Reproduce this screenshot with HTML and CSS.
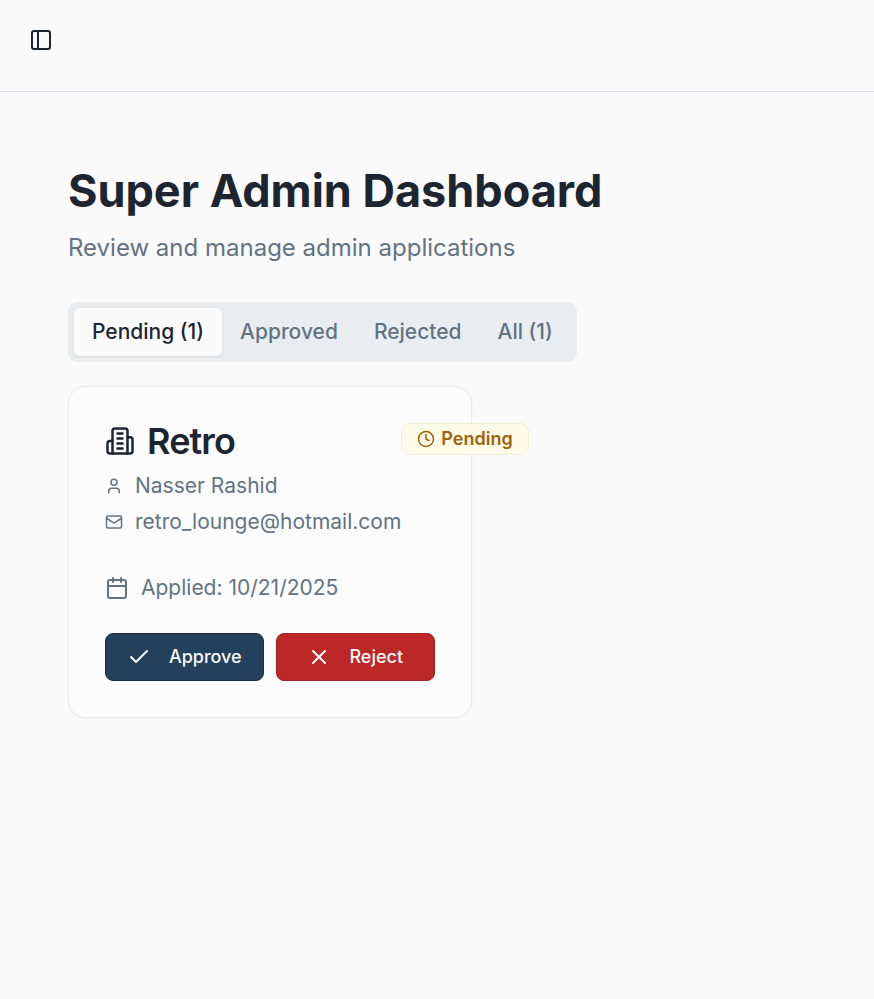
FILE: index.html
```html
<!DOCTYPE html>
<html lang="en">
<head>
<meta charset="utf-8">
<title>Super Admin Dashboard</title>
<link rel="stylesheet" href="styles.css">
</head>
<body>
<header class="topbar">
  <button class="toggle" aria-label="Toggle sidebar">
    <svg class="icon i24" viewBox="0 0 24 24"><rect x="3" y="3" width="18" height="18" rx="2"/><path d="M9 3v18"/></svg>
  </button>
</header>
<main class="page">
  <h1 class="title">Super Admin Dashboard</h1>
  <p class="subtitle">Review and manage admin applications</p>
  <div class="tabs">
    <button class="tab active">Pending (1)</button>
    <button class="tab">Approved</button>
    <button class="tab">Rejected</button>
    <button class="tab">All (1)</button>
  </div>
  <section class="card">
    <div class="card-head">
      <div class="info">
        <h2 class="name"><svg class="icon i30" viewBox="0 0 24 24"><path d="M6 22V4a2 2 0 0 1 2-2h8a2 2 0 0 1 2 2v18Z"/><path d="M6 12H4a2 2 0 0 0-2 2v6a2 2 0 0 0 2 2h2"/><path d="M18 9h2a2 2 0 0 1 2 2v9a2 2 0 0 1-2 2h-2"/><path d="M10 6h4M10 10h4M10 14h4M10 18h4"/></svg>Retro</h2>
        <div class="row"><svg class="icon i18" viewBox="0 0 24 24"><path d="M19 21v-2a4 4 0 0 0-4-4H9a4 4 0 0 0-4 4v2"/><circle cx="12" cy="7" r="4"/></svg>Nasser Rashid</div>
        <div class="row"><svg class="icon i18" viewBox="0 0 24 24"><rect x="2" y="4" width="20" height="16" rx="2"/><path d="m22 7-8.97 5.7a1.94 1.94 0 0 1-2.06 0L2 7"/></svg>retro_lounge@hotmail.com</div>
      </div>
      <span class="badge"><svg class="icon i18" viewBox="0 0 24 24"><circle cx="12" cy="12" r="10"/><path d="M12 6v6l4 2"/></svg><span class="label">Pending</span></span>
    </div>
    <div class="row applied"><svg class="icon i24" viewBox="0 0 24 24"><path d="M8 2v4M16 2v4"/><rect x="3" y="4" width="18" height="18" rx="2"/><path d="M3 10h18"/></svg>Applied: 10/21/2025</div>
    <div class="actions">
      <button class="btn approve"><svg class="icon i24" viewBox="0 0 24 24"><path d="M20 6 9 17l-5-5"/></svg><span class="label">Approve</span></button>
      <button class="btn reject"><svg class="icon i24" viewBox="0 0 24 24"><path d="M18 6 6 18M6 6l12 12"/></svg><span class="label">Reject</span></button>
    </div>
  </section>
</main>
</body>
</html>
```
FILE: styles.css
```css
* { box-sizing: border-box; margin: 0; }
body { min-height: 100vh; background: #fafafa; color: #1c2530; font-family: Inter, sans-serif; }
button { font: inherit; color: inherit; border: 0; background: none; padding: 0; }
.icon { display: block; flex: none; fill: none; stroke: currentColor; stroke-width: 2; stroke-linecap: round; stroke-linejoin: round; }
.i18 { width: 18px; height: 18px; }
.i24 { width: 24px; height: 24px; }
.i30 { width: 30px; height: 30px; }
.topbar { height: 92px; padding: 28px 29px; border-bottom: 1px solid #dbdfe4; }
.page { padding: 72px 68px; }
.title { font-size: 45px; line-height: 54px; font-weight: 700; white-space: nowrap; }
.subtitle { margin-top: 12px; font-size: 24px; line-height: 36px; color: #637381; }
.tabs { display: flex; width: max-content; height: 60px; margin-top: 36px; padding: 6px; border-radius: 9px; background: #e9edf0; }
.tab { padding: 0 18px; border-radius: 5px; font-size: 21px; line-height: 30px; font-weight: 500; color: #637381; }
.tab.active { background: #fafafa; color: #1c2530; box-shadow: 0 1px 3px rgba(0, 0, 0, .08); }
.card { width: 404px; margin-top: 24px; padding: 36px; border: 1px solid #e8eaeb; border-radius: 18px; background: #fcfcfc; box-shadow: 0 1px 3px rgba(0, 0, 0, .05); }
.card-head { display: flex; align-items: flex-start; }
.info { display: flex; flex-direction: column; gap: 6px; }
.name { display: flex; align-items: center; gap: 12px; height: 36px; margin-bottom: 6px; font-size: 36px; line-height: 36px; font-weight: 600; letter-spacing: -.9px; }
.row { display: flex; align-items: center; gap: 12px; font-size: 21px; line-height: 30px; color: #637381; }
.badge { display: flex; flex: none; align-items: center; gap: 6px; height: 32px; padding: 0 15px; border: 1px solid #f0eed4; border-radius: 9px; background: #fefce8; color: #a16207; font-size: 18px; font-weight: 600; }
.label { line-height: 24px; }
.applied { margin-top: 36px; }
.actions { display: flex; gap: 12px; margin-top: 30px; }
.btn { display: flex; flex: 1; align-items: center; justify-content: center; gap: 18px; height: 48px; border: 1px solid; border-radius: 8px; font-size: 18px; font-weight: 500; color: #fafafa; }
.btn .icon { margin-left: -.5px; }
.approve { background: #23405c; border-color: #192f47; }
.reject { background: #bc2828; border-color: #a22024; }
```
